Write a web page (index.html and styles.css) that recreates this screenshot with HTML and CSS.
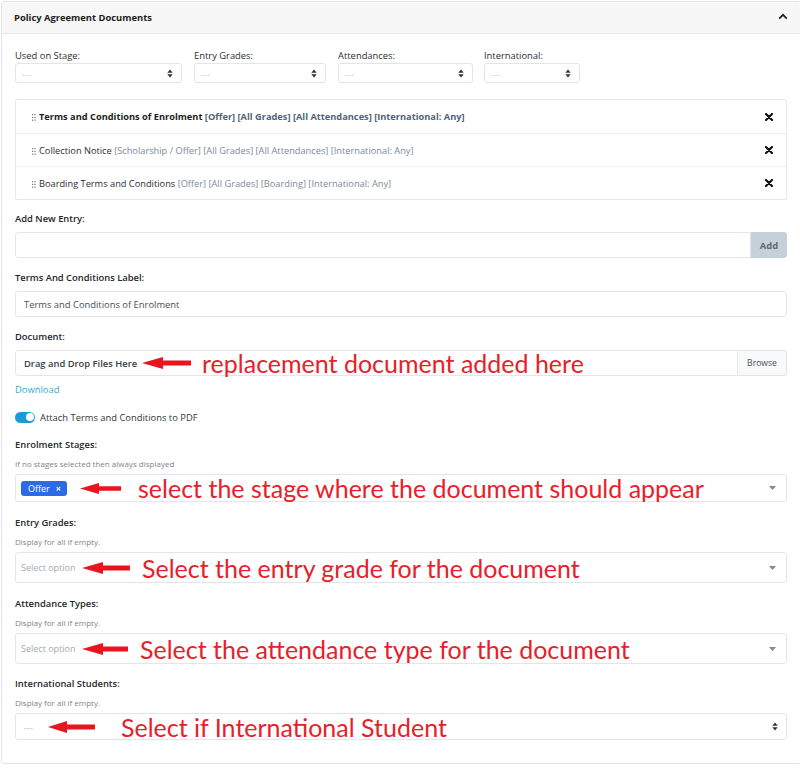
FILE: index.html
```html
<!DOCTYPE html>
<html lang="en">
<head>
<meta charset="utf-8">
<title>Policy Agreement Documents</title>
<link rel="stylesheet" href="styles.css">
</head>
<body>
<div class="card">
  <div class="card-header">
    <span class="card-title">Policy Agreement Documents</span>
    <svg class="chev" width="10" height="7" viewBox="0 0 10 7"><path d="M1.2 5.6 L5 1.8 L8.8 5.6" fill="none" stroke="#1f1f1f" stroke-width="1.7"/></svg>
  </div>
  <div class="card-body">
    <div class="filters">
      <div class="filter f1">
        <div class="flabel">Used on Stage:</div>
        <div class="fsel"><span class="ph">---</span><svg class="sort" width="6" height="9" viewBox="0 0 6 9"><path d="M0.3 3.8 L3 0.6 L5.7 3.8Z M0.3 5.2 L3 8.4 L5.7 5.2Z" fill="#333"/></svg></div>
      </div>
      <div class="filter f2">
        <div class="flabel">Entry Grades:</div>
        <div class="fsel"><span class="ph">---</span><svg class="sort" width="6" height="9" viewBox="0 0 6 9"><path d="M0.3 3.8 L3 0.6 L5.7 3.8Z M0.3 5.2 L3 8.4 L5.7 5.2Z" fill="#333"/></svg></div>
      </div>
      <div class="filter f3">
        <div class="flabel">Attendances:</div>
        <div class="fsel"><span class="ph">---</span><svg class="sort" width="6" height="9" viewBox="0 0 6 9"><path d="M0.3 3.8 L3 0.6 L5.7 3.8Z M0.3 5.2 L3 8.4 L5.7 5.2Z" fill="#333"/></svg></div>
      </div>
      <div class="filter f4">
        <div class="flabel">International:</div>
        <div class="fsel"><span class="ph">---</span><svg class="sort" width="6" height="9" viewBox="0 0 6 9"><path d="M0.3 3.8 L3 0.6 L5.7 3.8Z M0.3 5.2 L3 8.4 L5.7 5.2Z" fill="#333"/></svg></div>
      </div>
    </div>

    <ul class="entries">
      <li class="entry active">
        <span class="etext"><svg class="handle" width="4" height="7" viewBox="0 0 4 7"><g fill="#777"><rect x="0" y="0" width="1.2" height="1.2"/><rect x="2.4" y="0" width="1.2" height="1.2"/><rect x="0" y="2.8" width="1.2" height="1.2"/><rect x="2.4" y="2.8" width="1.2" height="1.2"/><rect x="0" y="5.6" width="1.2" height="1.2"/><rect x="2.4" y="5.6" width="1.2" height="1.2"/></g></svg><span class="ename">Terms and Conditions of Enrolment</span> <span class="etags">[Offer] [All Grades] [All Attendances] [International: Any]</span></span>
        <svg class="del" width="8" height="8" viewBox="0 0 8 8"><path d="M1 1 L7 7 M7 1 L1 7" stroke="#111" stroke-width="2.2" stroke-linecap="round"/></svg>
      </li>
      <li class="entry">
        <span class="etext"><svg class="handle" width="4" height="7" viewBox="0 0 4 7"><g fill="#777"><rect x="0" y="0" width="1.2" height="1.2"/><rect x="2.4" y="0" width="1.2" height="1.2"/><rect x="0" y="2.8" width="1.2" height="1.2"/><rect x="2.4" y="2.8" width="1.2" height="1.2"/><rect x="0" y="5.6" width="1.2" height="1.2"/><rect x="2.4" y="5.6" width="1.2" height="1.2"/></g></svg><span class="ename">Collection Notice</span> <span class="etags">[Scholarship / Offer] [All Grades] [All Attendances] [International: Any]</span></span>
        <svg class="del" width="8" height="8" viewBox="0 0 8 8"><path d="M1 1 L7 7 M7 1 L1 7" stroke="#111" stroke-width="2.2" stroke-linecap="round"/></svg>
      </li>
      <li class="entry">
        <span class="etext"><svg class="handle" width="4" height="7" viewBox="0 0 4 7"><g fill="#777"><rect x="0" y="0" width="1.2" height="1.2"/><rect x="2.4" y="0" width="1.2" height="1.2"/><rect x="0" y="2.8" width="1.2" height="1.2"/><rect x="2.4" y="2.8" width="1.2" height="1.2"/><rect x="0" y="5.6" width="1.2" height="1.2"/><rect x="2.4" y="5.6" width="1.2" height="1.2"/></g></svg><span class="ename">Boarding Terms and Conditions</span> <span class="etags">[Offer] [All Grades] [Boarding] [International: Any]</span></span>
        <svg class="del" width="8" height="8" viewBox="0 0 8 8"><path d="M1 1 L7 7 M7 1 L1 7" stroke="#111" stroke-width="2.2" stroke-linecap="round"/></svg>
      </li>
    </ul>

    <div class="field">
      <div class="label">Add New Entry:</div>
      <div class="group">
        <div class="input grow"></div>
        <div class="btn-add">Add</div>
      </div>
    </div>

    <div class="field">
      <div class="label">Terms And Conditions Label:</div>
      <div class="input text">Terms and Conditions of Enrolment</div>
    </div>

    <div class="field">
      <div class="label">Document:</div>
      <div class="group file">
        <div class="input grow drop">Drag and Drop Files Here</div>
        <div class="btn-browse">Browse</div>
        <div class="note n-doc">
          <svg class="arrow" width="50" height="13" viewBox="0 0 50 13"><path d="M0 6.5 L21 0.5 L21 4 L49 4 L49 9 L21 9 L21 12.5Z" fill="#e8141e"/></svg>
          <span class="ntext">replacement document added here</span>
        </div>
      </div>
    </div>

    <a class="download">Download</a>

    <div class="switch-row">
      <span class="switch"><span class="knob"></span></span>
      <span class="switch-label">Attach Terms and Conditions to PDF</span>
    </div>

    <div class="field sel-field">
      <div class="label">Enrolment Stages:</div>
      <div class="hint">If no stages selected then always displayed</div>
      <div class="msel stages">
        <span class="tag">Offer <span class="tag-x">×</span></span>
        <svg class="caret" width="7" height="4" viewBox="0 0 7 4"><path d="M0 0 L7 0 L3.5 4Z" fill="#888"/></svg>
        <div class="note n-stage">
          <svg class="arrow" width="42" height="12" viewBox="0 0 42 12"><path d="M0 6 L19 0.5 L19 3.7 L41 3.7 L41 8.3 L19 8.3 L19 11.5Z" fill="#e8141e"/></svg>
          <span class="ntext">select the stage where the document should appear</span>
        </div>
      </div>
    </div>

    <div class="field sel-field">
      <div class="label">Entry Grades:</div>
      <div class="hint">Display for all if empty.</div>
      <div class="msel tall">
        <span class="ph2">Select option</span>
        <svg class="caret" width="7" height="4" viewBox="0 0 7 4"><path d="M0 0 L7 0 L3.5 4Z" fill="#888"/></svg>
        <div class="note n-grade">
          <svg class="arrow" width="49" height="13" viewBox="0 0 49 13"><path d="M0 6.5 L21 0.5 L21 4 L48 4 L48 9 L21 9 L21 12.5Z" fill="#e8141e"/></svg>
          <span class="ntext">Select the entry grade for the document</span>
        </div>
      </div>
    </div>

    <div class="field sel-field">
      <div class="label">Attendance Types:</div>
      <div class="hint">Display for all if empty.</div>
      <div class="msel tall">
        <span class="ph2">Select option</span>
        <svg class="caret" width="7" height="4" viewBox="0 0 7 4"><path d="M0 0 L7 0 L3.5 4Z" fill="#888"/></svg>
        <div class="note n-att">
          <svg class="arrow" width="47" height="13" viewBox="0 0 47 13"><path d="M0 6.5 L21 0.5 L21 4 L46 4 L46 9 L21 9 L21 12.5Z" fill="#e8141e"/></svg>
          <span class="ntext">Select the attendance type for the document</span>
        </div>
      </div>
    </div>

    <div class="field sel-field last">
      <div class="label">International Students:</div>
      <div class="hint">Display for all if empty.</div>
      <div class="msel intl">
        <span class="ph3">---</span>
        <svg class="sort" width="6" height="9" viewBox="0 0 6 9"><path d="M0.3 3.8 L3 0.6 L5.7 3.8Z M0.3 5.2 L3 8.4 L5.7 5.2Z" fill="#333"/></svg>
        <div class="note n-intl">
          <svg class="arrow" width="48" height="13" viewBox="0 0 48 13"><path d="M0 6.5 L19 0.5 L19 4 L47 4 L47 9 L19 9 L19 12.5Z" fill="#e8141e"/></svg>
          <span class="ntext">Select if International Student</span>
        </div>
      </div>
    </div>
  </div>
</div>
</body>
</html>
```

FILE: styles.css
```css
* { box-sizing: border-box; }

body {
  margin: 0;
  padding: 1px 0 0 1px;
  font-family: "Open Sans", "Noto Sans", sans-serif;
  font-size: 9.4px;
  color: #212529;
  background: #fff;
}

.card {
  width: 800px;
  border: 1px solid #e3e6e9;
  border-radius: 3px;
  background: #fff;
}

.card-header {
  height: 32px;
  background: #f7f7f7;
  border-bottom: 1px solid #e3e6e9;
  display: flex;
  align-items: center;
  justify-content: space-between;
  padding: 0 12px 0 12px;
}

.card-title {
  font-weight: 700;
  font-size: 9.4px;
  color: #1d1d1d;
}

.chev { display: block; margin-top: -2px; }

.card-body {
  padding: 15px 13px 23px 13px;
}

/* filters */
.filters {
  display: flex;
  gap: 12px;
}
.f1 { width: 167px; }
.f2 { width: 132px; }
.f3 { width: 135px; }
.f4 { width: 96px; margin-left: -1px; }

.flabel {
  line-height: 14px;
  color: #2b2f33;
}

.fsel {
  height: 20px;
  border: 1px solid #e1e5e9;
  border-radius: 3px;
  display: flex;
  align-items: center;
  justify-content: space-between;
  padding: 0 8px 0 6px;
}
.ph { color: #b5b9bd; font-size: 8px; letter-spacing: 0.5px; }
.sort { display: block; }

/* entries */
.entries {
  list-style: none;
  margin: 16px 0 0 0;
  padding: 0;
  border: 1px solid #e6e9ec;
  border-radius: 2px;
  font-size: 9.25px;
}
.entry {
  height: 33px;
  display: flex;
  align-items: center;
  justify-content: space-between;
  padding: 0 13px 0 16px;
  border-top: 1px solid #eceef0;
}
.entry:first-child { border-top: none; }
.handle { display: inline-block; margin-right: 3px; vertical-align: -1px; }
.ename { color: #2a2e32; }
.etags { color: #7b8a99; }
.active .ename { font-weight: 700; color: #1b1e21; }
.active .etags { font-weight: 700; color: #4f6478; }
.del { display: block; }

/* fields */
.field { margin-top: 12px; }
.field + .field { margin-top: 13px; }

.label {
  font-weight: 600;
  line-height: 14px;
  color: #23272b;
  margin-bottom: 6px;
}

.hint {
  font-size: 8px;
  line-height: 12px;
  color: #7d858c;
  margin-top: 1px;
  margin-bottom: 4px;
}

.group {
  display: flex;
  height: 26px;
  position: relative;
}

.input {
  height: 26px;
  border: 1px solid #e2e6ea;
  border-radius: 3px;
}
.group .input { border-radius: 3px 0 0 3px; }
.grow { flex: 1; }

.text {
  display: flex;
  align-items: center;
  padding-left: 8px;
  color: #4a5056;
}

.btn-add {
  width: 36px;
  background: #c6d0d8;
  border-radius: 0 3px 3px 0;
  color: #5f6870;
  font-weight: 700;
  display: flex;
  align-items: center;
  justify-content: center;
}

.drop {
  display: flex;
  align-items: center;
  padding-left: 8px;
  font-weight: 600;
  color: #3a4046;
}

.btn-browse {
  width: 50px;
  background: #f8f9fa;
  border: 1px solid #e2e6ea;
  border-left: 1px solid #e6e9ec;
  border-radius: 0 3px 3px 0;
  margin-left: -1px;
  color: #495057;
  font-size: 8.6px;
  display: flex;
  align-items: center;
  justify-content: center;
}

.download {
  display: block;
  margin-top: 7px;
  line-height: 14px;
  color: #3ea6dc;
}

.switch-row {
  display: flex;
  align-items: center;
  margin-top: 13px;
  height: 14px;
}
.switch {
  width: 20px;
  height: 11px;
  border-radius: 6px;
  background: #1b9bd8;
  position: relative;
  margin-right: 5px;
}
.knob {
  position: absolute;
  right: 1.5px;
  top: 1.5px;
  width: 8px;
  height: 8px;
  border-radius: 50%;
  background: #fff;
}
.switch-label { color: #33383d; }

.switch-row + .field { margin-top: 14px; }
.sel-field + .sel-field { margin-top: 14px; }
.sel-field + .sel-field.last { margin-top: 13px; }

/* multi selects */
.msel {
  position: relative;
  border: 1px solid #e2e6ea;
  border-radius: 3px;
  display: flex;
  align-items: center;
  justify-content: space-between;
  padding: 0 10px 0 5px;
}
.stages { height: 28px; }
.tall { height: 31px; }
.intl { height: 27px; padding-right: 8px; }

.tag {
  display: inline-flex;
  align-items: center;
  height: 15px;
  padding: 0 6px 0 7px;
  background: #2d6ae6;
  color: #fff;
  border-radius: 3px;
  font-size: 9px;
}
.tag-x { margin-left: 6px; font-weight: 700; font-size: 9px; }
.caret { display: block; }

.ph2 { color: #a4aaaf; font-size: 9px; }
.ph3 { color: #9aa0a5; font-size: 8px; letter-spacing: 0.5px; margin-left: 3px; }

/* annotations */
.note {
  position: absolute;
  top: 50%;
  transform: translateY(-50%);
  display: flex;
  align-items: center;
  pointer-events: none;
}
.arrow { display: block; }
.ntext {
  font-family: "Lato", "Open Sans", sans-serif;
  font-size: 25px;
  color: #e8202a;
  white-space: nowrap;
  line-height: 1;
}
.n-doc { left: 127px; }
.n-doc .ntext { margin-left: 10px; }
.n-stage { left: 64px; }
.n-stage .ntext { margin-left: 16px; }
.n-grade { left: 66px; }
.n-grade .ntext { margin-left: 11px; }
.n-att { left: 66px; }
.n-att .ntext { margin-left: 11px; }
.n-intl { left: 32px; }
.n-intl .ntext { margin-left: 25px; }
```
